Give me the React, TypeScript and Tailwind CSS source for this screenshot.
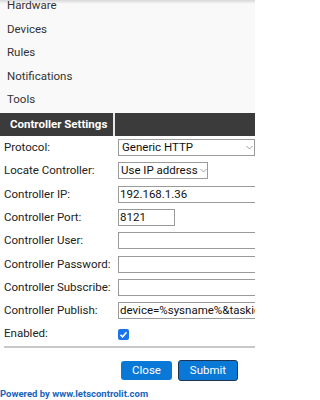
const menu = ['Hardware', 'Devices', 'Rules', 'Notifications', 'Tools'];

function Chevron() {
  return (
    <svg width="7" height="5" viewBox="0 0 7 5" className="shrink-0">
      <path d="M0.5 1 L3.5 4 L6.5 1" fill="none" stroke="#888" strokeWidth="0.8" />
    </svg>
  );
}

function Row({ label, children }: { label: string; children?: React.ReactNode }) {
  return (
    <div className="flex h-[23.3px] items-center">
      <div className="w-[118px] shrink-0 pl-[4px] text-[#222]">{label}</div>
      <div className="flex items-center">{children}</div>
    </div>
  );
}

function TextBox({ value = '', w = 'w-[160px]' }: { value?: string; w?: string }) {
  return (
    <div className={`${w} flex h-[17px] shrink-0 items-center overflow-hidden whitespace-nowrap border border-[#9a9a9a] bg-white pl-[1px] text-[#111]`}>
      {value}
    </div>
  );
}

export default function App() {
  return (
    <div className="relative h-[400px] w-[255px] overflow-hidden bg-white text-[11.5px] font-['Roboto',sans-serif]">
      {/* menu */}
      <div className="bg-[#f9f9f9] pb-[1.5px]">
        <div className="-mt-[6px]">
          {menu.map((m) => (
            <div key={m} className="flex h-[23.5px] items-center pl-[7px] text-[#333]">
              {m}
            </div>
          ))}
        </div>
      </div>
      <div className="pointer-events-none absolute left-0 right-0 top-0 h-[4px] bg-gradient-to-b from-[#00000022] to-transparent" />

      {/* header */}
      <div className="flex h-[23px] bg-[#e8e8e8]">
        <div className="flex w-[113px] items-center bg-[#3b3b3b] pl-[10px] font-bold text-white">Controller Settings</div>
        <div className="ml-[2px] flex-1 bg-[#3b3b3b]" />
      </div>

      {/* form */}
      <div className="overflow-hidden">
        <Row label="Protocol:">
          <div className="flex h-[17px] w-[137px] items-center justify-between border border-[#9a9a9a] bg-white pl-[3px] pr-[1px] text-[#111]">
            <span>Generic HTTP</span>
            <Chevron />
          </div>
        </Row>
        <Row label="Locate Controller:">
          <div className="flex h-[17px] w-[90px] items-center gap-[2px] border border-[#9a9a9a] bg-white pl-[2px] text-[#111]">
            <span>Use IP address</span>
            <Chevron />
          </div>
        </Row>
        <Row label="Controller IP:">
          <TextBox value="192.168.1.36" />
        </Row>
        <Row label="Controller Port:">
          <TextBox value="8121" w="w-[57px]" />
        </Row>
        <Row label="Controller User:">
          <TextBox />
        </Row>
        <Row label="Controller Password:">
          <TextBox />
        </Row>
        <Row label="Controller Subscribe:">
          <TextBox />
        </Row>
        <Row label="Controller Publish:">
          <TextBox value="device=%sysname%&taskid=%tid%" />
        </Row>
        <Row label="Enabled:">
          <div className="flex h-[11px] w-[11px] items-center justify-center rounded-[2px] bg-[#1a73e8]">
            <svg width="9" height="9" viewBox="0 0 9 9">
              <path d="M1.5 4.8 L3.6 6.8 L7.5 2.2" fill="none" stroke="white" strokeWidth="1.6" />
            </svg>
          </div>
        </Row>
      </div>

      <div className="ml-[4px] h-[2px] bg-[#c8c8c8]" />

      {/* buttons */}
      <div className="mt-[13px] flex gap-[6px] pl-[121px]">
        <button className="flex h-[19px] w-[51px] items-center justify-center rounded-[3px] bg-[#0a78d7] text-[11.5px] text-white">
          Close
        </button>
        <button className="-mt-[1px] flex h-[21px] w-[60px] items-center justify-center rounded-[3px] border-[1.5px] border-[#1d3550] bg-[#0a78d7] text-[11.5px] text-white">
          Submit
        </button>
      </div>

      <div className="mt-[6px] text-[9.5px] font-bold text-[#1565c0]">Powered by www.letscontrolit.com</div>
    </div>
  );
}
